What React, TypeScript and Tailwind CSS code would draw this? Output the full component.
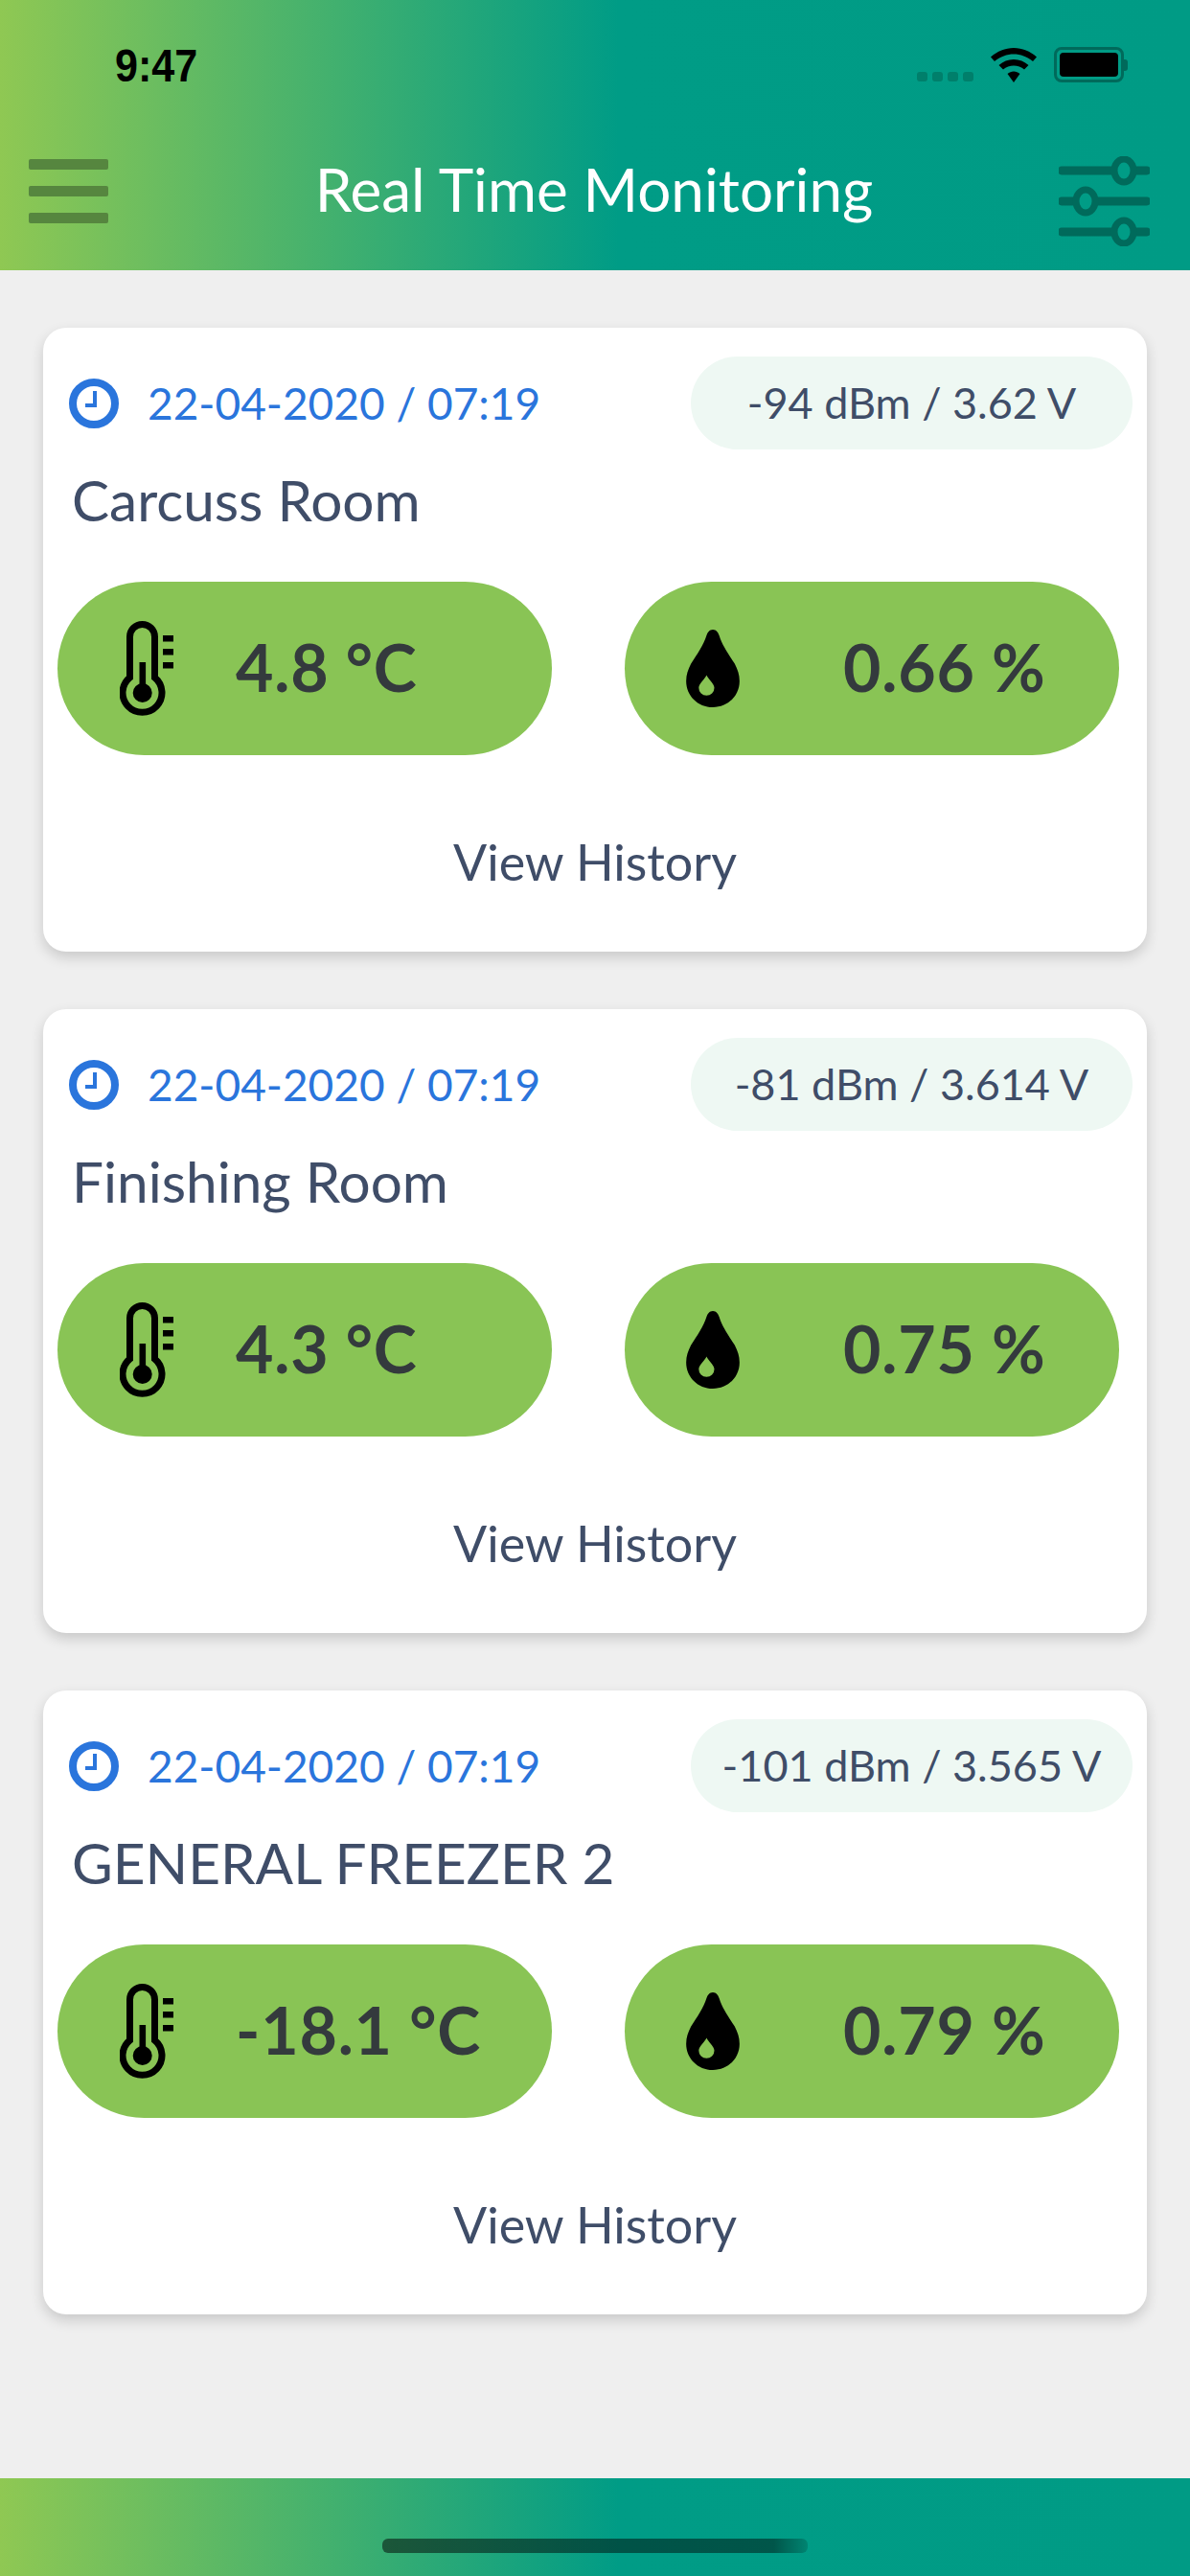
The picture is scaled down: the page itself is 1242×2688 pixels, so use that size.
const sensors = [
  { name: 'Carcuss Room', signal: '-94 dBm / 3.62 V', temp: '4.8 °C', humidity: '0.66 %' },
  { name: 'Finishing Room', signal: '-81 dBm / 3.614 V', temp: '4.3 °C', humidity: '0.75 %' },
  { name: 'GENERAL FREEZER 2', signal: '-101 dBm / 3.565 V', temp: '-18.1 °C', humidity: '0.79 %' },
];

const barGradient = 'bg-[linear-gradient(90deg,#8fc853_0%,#009c86_52%,#009b85_100%)]';

function ClockIcon() {
  return (
    <svg width="52" height="52" viewBox="0 0 52 52" fill="none" className="shrink-0">
      <circle cx="26" cy="26" r="22" stroke="#2a75dc" strokeWidth="8" />
      <path d="M27 13v15H17" stroke="#2a75dc" strokeWidth="4" />
    </svg>
  );
}

function ThermometerIcon() {
  return (
    <svg width="56" height="99" viewBox="0 0 56 99" fill="none" className="shrink-0">
      <path
        d="M10.5 59V16.5a13 13 0 0 1 26 0V59A20.5 20.5 0 1 1 10.5 59Z"
        stroke="#000"
        strokeWidth="7"
      />
      <circle cx="23.7" cy="75" r="10" fill="#000" />
      <rect x="20.5" y="43" width="6.6" height="28" fill="#000" />
      <rect x="45" y="15" width="11" height="6.5" fill="#000" />
      <rect x="45" y="29" width="11" height="6.5" fill="#000" />
      <rect x="45" y="43" width="11" height="6.5" fill="#000" />
    </svg>
  );
}

function DropIcon() {
  return (
    <svg width="56" height="81" viewBox="0 0 55 80" className="shrink-0">
      <path
        fill="#000"
        fillRule="evenodd"
        d="M27.5 0C31 0 33 3 34 6C37 16 44 26 50 35C53 41 55 46 55 53C55 68 43 80 27.5 80C12 80 0 68 0 53C0 46 2 41 5 35C11 26 18 16 21 6C22 3 24 0 27.5 0ZM21 47C20 50 13 56 13 60A8 8 0 0 0 29 60C29 56 22 50 21 47Z"
      />
    </svg>
  );
}

function MenuIcon() {
  return (
    <div className="flex w-[83px] flex-col gap-[17px]">
      <div className="h-[11px] rounded-[2px] bg-[#56863f]" />
      <div className="h-[11px] rounded-[2px] bg-[#56863f]" />
      <div className="h-[11px] rounded-[2px] bg-[#56863f]" />
    </div>
  );
}

function SlidersIcon() {
  return (
    <svg width="95" height="94" viewBox="0 0 95 94" fill="none" stroke="#006a5b" className="mt-[22px]">
      <path d="M3 15H92M3 47H92M3 79H92" strokeWidth="9" strokeLinecap="round" />
      <ellipse cx="68" cy="15" rx="10" ry="12" fill="#009c86" strokeWidth="7" />
      <ellipse cx="28" cy="47" rx="10" ry="12" fill="#009c86" strokeWidth="7" />
      <ellipse cx="68" cy="79" rx="10" ry="12" fill="#009c86" strokeWidth="7" />
    </svg>
  );
}

function WifiIcon() {
  return (
    <svg width="48" height="36" viewBox="0 0 48 36" fill="#000">
      <path d="M24 0C15 0 7 3.500 0 9.500L4 14C10 9 17 6.500 24 6.500C31 6.500 38 9 44 14L48 9.500C41 3.500 33 0 24 0Z" />
      <path d="M24 12C18 12 13 14 8.500 18L13 22.500C16 20 20 18.500 24 18.500C28 18.500 32 20 35 22.500L39.500 18C35 14 30 12 24 12Z" />
      <path d="M24 24.500C21.500 24.500 19.500 25.500 17.500 27L24 36L30.500 27C28.500 25.500 26.500 24.500 24 24.500Z" />
    </svg>
  );
}

function StatusBar() {
  return (
    <div className="flex h-[136px] items-start justify-between pt-[38px] pl-[120px] pr-[65px]">
      <span className="font-['Liberation_Sans',sans-serif] text-[49px] leading-[60px] font-bold text-black [transform:scaleX(0.88)] origin-left">
        9:47
      </span>
      <div className="flex items-end gap-[18px] pt-[11px]">
        <div className="flex items-center gap-[5px] pb-[1px]">
          <div className="h-[10px] w-[11px] rounded-[3px] bg-[#007f6b]" />
          <div className="h-[10px] w-[11px] rounded-[3px] bg-[#007f6b]" />
          <div className="h-[10px] w-[11px] rounded-[3px] bg-[#007f6b]" />
          <div className="h-[10px] w-[11px] rounded-[3px] bg-[#007f6b]" />
        </div>
        <WifiIcon />
        <div className="flex items-center">
          <div className="h-[37px] w-[73px] rounded-[8px] border-[3px] border-[#006a5b] p-[3px]">
            <div className="h-full w-full rounded-[4px] bg-black" />
          </div>
          <div className="h-[12px] w-[4px] rounded-r-[3px] bg-[#006a5b]" />
        </div>
      </div>
    </div>
  );
}

function MetricPill({ icon, value, iconClass }: { icon: React.ReactNode; value: string; iconClass: string }) {
  return (
    <div className="flex h-[181px] w-[516px] items-center rounded-full bg-[#89c455]">
      <div className={iconClass}>{icon}</div>
      <span className="pb-[4px] font-['Lato',sans-serif] text-[68px] font-bold leading-none tracking-[0.8px] text-[#343a3d]">
        {value}
      </span>
    </div>
  );
}

function SensorCard({ name, signal, temp, humidity }: (typeof sensors)[number]) {
  return (
    <div className="h-[651px] rounded-[24px] bg-white pt-[30px] shadow-[0_6px_14px_rgba(0,0,0,0.16)]">
      <div className="flex items-center justify-between pl-[27px] pr-[15px]">
        <div className="flex items-center gap-[30px]">
          <ClockIcon />
          <span className="text-[46px] leading-none text-[#2a75dc]">22-04-2020 / 07:19</span>
        </div>
        <div className="flex h-[97px] w-[461px] items-center justify-center rounded-full bg-[#eef8f3] text-[45px] text-[#3f4d68]">
          {signal}
        </div>
      </div>
      <div className="mt-[16px] pl-[30px] text-[58.500px] leading-[72px] text-[#3f4d68]">{name}</div>
      <div className="mt-[50px] flex gap-[76px] pl-[15px]">
        <MetricPill icon={<ThermometerIcon />} value={temp} iconClass="ml-[65px] mr-[65px]" />
        <MetricPill icon={<DropIcon />} value={humidity} iconClass="ml-[64px] mr-[108px]" />
      </div>
      <div className="mt-[76px] text-center text-[52px] leading-[70px] text-[#3f4d68]">View History</div>
    </div>
  );
}

export default function App() {
  return (
    <div className="flex h-[2688px] w-[1242px] flex-col bg-[#efefef] font-['Lato',sans-serif]">
      <header className={`h-[282px] ${barGradient}`}>
        <StatusBar />
        <div className="flex items-center pt-[5px] pl-[30px] pr-[42px]">
          <div className="w-[105px]">
            <MenuIcon />
          </div>
          <h1 className="flex-1 pb-[5px] text-center text-[62px] font-normal leading-[70px] text-white">Real Time Monitoring</h1>
          <SlidersIcon />
        </div>
      </header>
      <main className="flex flex-1 flex-col gap-[60px] px-[45px] pt-[60px]">
        {sensors.map((s) => (
          <SensorCard key={s.name} {...s} />
        ))}
      </main>
      <footer className={`flex h-[102px] justify-center pt-[63px] ${barGradient}`}>
        <div className="h-[15px] w-[444px] rounded-[6px] bg-[linear-gradient(90deg,rgba(0,0,0,0.5)_0%,rgba(0,0,0,0.45)_92%,rgba(0,0,0,0.15)_100%)]" />
      </footer>
    </div>
  );
}
